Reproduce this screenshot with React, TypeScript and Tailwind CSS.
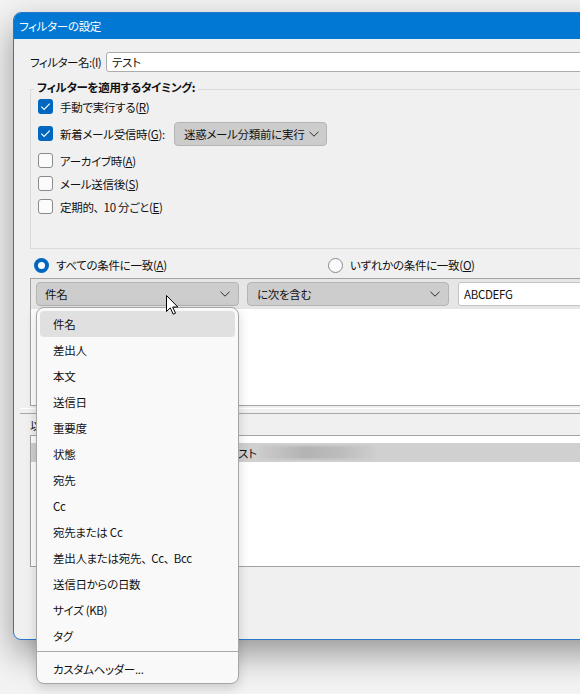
import React from "react";

function Chevron() {
  return (
    <svg width="10" height="6" viewBox="0 0 10 6" className="shrink-0">
      <path d="M0.5 0.8 L5 5.2 L9.5 0.8" fill="none" stroke="#2b2b2b" strokeWidth="1" />
    </svg>
  );
}

function CheckBox({ checked }: { checked?: boolean }) {
  if (checked) {
    return (
      <div className="w-[15px] h-[15px] rounded-[3px] bg-[#0067c0] flex items-center justify-center shrink-0">
        <svg width="15" height="15" viewBox="0 0 15 15">
          <path d="M3.3 7.6 L6.1 10.4 L11.8 4.6" fill="none" stroke="#ffffff" strokeWidth="1.1" />
        </svg>
      </div>
    );
  }
  return <div className="w-[15px] h-[15px] rounded-[3px] border border-[#8a8a8a] bg-[#fbfbfb] shrink-0" />;
}

function Radio({ on }: { on?: boolean }) {
  if (on) {
    return (
      <div className="w-[15px] h-[15px] rounded-full bg-[#0067c0] flex items-center justify-center shrink-0">
        <div className="w-[7px] h-[7px] rounded-full bg-white" />
      </div>
    );
  }
  return <div className="w-[15px] h-[15px] rounded-full border border-[#8a8a8a] bg-[#fbfbfb] shrink-0" />;
}

function Comma() {
  return <span className="[font-feature-settings:normal] tracking-[-1.5px]">、</span>;
}

const menuItems: React.ReactNode[] = [
  "件名",
  "差出人",
  "本文",
  "送信日",
  "重要度",
  "状態",
  "宛先",
  "Cc",
  "宛先または Cc",
  <>
    差出人または宛先<Comma />Cc<Comma />Bcc
  </>,
  "送信日からの日数",
  "サイズ (KB)",
  "タグ",
];

export default function App() {
  return (
    <div className="relative w-[580px] h-[694px] overflow-hidden whitespace-nowrap bg-[#f3f3f3] pl-[13px] pt-[12px] font-['Noto_Sans_CJK_JP','Noto_Sans',sans-serif] [font-feature-settings:'palt'] text-[11.5px] tracking-[-0.3px] text-[#111]">
      {/* dialog window */}
      <div className="w-[720px] h-[628px] rounded-[8px] overflow-hidden border border-[#2a78c8] bg-[#f0f0f0] shadow-[0_14px_34px_rgba(0,0,0,0.38)] flex flex-col">
        <div className="h-[27px] bg-[#0078d4] text-white flex items-center pl-[5px] -mt-px leading-[16px] shrink-0">
          フィルターの設定
        </div>

        <div className="pl-[16px] pt-[13px] flex flex-col">
          {/* filter name */}
          <div className="h-[20px] flex items-center">
            <span className="w-[76px] shrink-0 leading-[16px] tracking-[-0.5px]">フィルター名:(I)</span>
            <div className="flex-1 h-[20px] bg-white border border-[#acacac] rounded-l-[3px] flex items-center pl-[5px] leading-[16px]">
              テスト
            </div>
          </div>

          {/* timing group */}
          <div className="relative mt-[17px] h-[160px] border border-[#dadada] pt-[5px] pl-[7px]">
            <span className="absolute -top-[12px] left-[3px] px-[3px] bg-[#f0f0f0] font-bold leading-[18px]">
              フィルターを適用するタイミング:
            </span>
            <div className="h-[23px] flex items-center">
              <CheckBox checked />
              <span className="ml-[7px] leading-[16px]">
                手動で実行する(<span className="underline">R</span>)
              </span>
            </div>
            <div className="h-[31px] flex items-center">
              <CheckBox checked />
              <span className="ml-[7px] leading-[16px]">
                新着メール受信時(<span className="underline">G</span>):
              </span>
              <div className="ml-[9px] shrink-0 w-[153px] h-[24px] rounded-[4px] bg-[#cccccc] border border-[#b5b5b5] flex items-center pl-[9px] pr-[7px] justify-between">
                <span className="leading-[16px]">迷惑メール分類前に実行</span>
                <Chevron />
              </div>
            </div>
            <div className="h-[23px] flex items-center">
              <CheckBox />
              <span className="ml-[7px] leading-[16px]">
                アーカイブ時(<span className="underline">A</span>)
              </span>
            </div>
            <div className="h-[23px] flex items-center">
              <CheckBox />
              <span className="ml-[7px] leading-[16px]">
                メール送信後(<span className="underline">S</span>)
              </span>
            </div>
            <div className="h-[23px] flex items-center">
              <CheckBox />
              <span className="ml-[7px] leading-[16px]">
                定期的<Comma />10 分ごと(<span className="underline">E</span>)
              </span>
            </div>
          </div>

          {/* match radios */}
          <div className="h-[29px] pt-[3px] flex items-center">
            <div className="w-[298px] shrink-0 pl-[4px] flex items-center">
              <Radio on />
              <span className="ml-[7px] leading-[16px]">
                すべての条件に一致(<span className="underline">A</span>)
              </span>
            </div>
            <div className="flex items-center">
              <Radio />
              <span className="ml-[7px] leading-[16px]">
                いずれかの条件に一致(<span className="underline">O</span>)
              </span>
            </div>
          </div>

          {/* conditions list */}
          <div className="h-[128px] border border-[#a3a3a3] bg-white">
            <div className="h-[30px] bg-[#e6e6e6] flex items-center pl-[5px]">
              <div className="w-[203px] shrink-0 h-[24px] rounded-[4px] bg-[#cdcdcd] border border-[#b5b5b5] flex items-center justify-between pl-[8px] pr-[8px]">
                <span className="leading-[16px]">件名</span>
                <Chevron />
              </div>
              <div className="ml-[8px] shrink-0 w-[202px] h-[24px] rounded-[4px] bg-[#cdcdcd] border border-[#b5b5b5] flex items-center justify-between pl-[9px] pr-[8px]">
                <span className="leading-[16px]">に次を含む</span>
                <Chevron />
              </div>
              <div className="ml-[9px] shrink-0 w-[200px] h-[24px] rounded-l-[3px] bg-white border border-[#c4c4c4] flex items-center pl-[5px] leading-[16px]">
                ABCDEFG
              </div>
            </div>
          </div>

          {/* separator */}
          <div className="-ml-[10px] mt-[2px] h-px bg-white" />
          <div className="-ml-[10px] mt-[4px] h-px bg-[#a8a8a8]" />

          <div className="h-[21px] flex items-center leading-[16px]">以下のフォルダー</div>

          {/* lower list */}
          <div className="h-[132px] border border-[#a3a3a3] bg-white pt-[7px]">
            <div className="h-[19px] bg-[#d0d0d0] flex items-center pl-[197px]">
              <span className="leading-[16px]">テスト</span>
              <div className="ml-[3px] w-[114px] h-[13px] bg-[linear-gradient(90deg,#cbcbcb,#b3b3b3_40%,#bcbcbc_70%,#cdcdcd)] blur-[1px]" />
            </div>
          </div>
        </div>
      </div>

      {/* dropdown menu */}
      <div className="absolute left-[36px] top-[307px] w-[203px] rounded-[8px] border border-[#a6a6a6] bg-[#f9f9f9] shadow-[0_4px_12px_rgba(0,0,0,0.16)] pt-[3px] pb-px">
        <div className="px-[3px]">
          {menuItems.map((t, i) => (
            <div
              key={i}
              className={
                i === 0
                  ? "h-[26px] flex items-center pl-[13px] rounded-[4px] bg-[#e0e0e0] leading-[16px]"
                  : "h-[26px] flex items-center pl-[13px] rounded-[4px] leading-[16px]"
              }
            >
              {t}
            </div>
          ))}
        </div>
        <div className="mt-[2px] h-px bg-[#a8a8a8]" />
        <div className="px-[3px] pt-[4px]">
          <div className="h-[26px] flex items-center pl-[13px] leading-[16px]">カスタムヘッダー...</div>
        </div>
      </div>

      {/* mouse cursor */}
      <svg className="absolute left-[166px] top-[295px]" width="13" height="20" viewBox="0 0 13 20">
        <path
          d="M0.5 0.5 L0.5 16.5 L4.3 12.9 L7.2 19.2 L9.5 18.2 L6.7 12 L11.8 12 Z"
          fill="#ffffff"
          stroke="#000000"
          strokeWidth="1"
          strokeLinejoin="round"
        />
      </svg>
    </div>
  );
}
